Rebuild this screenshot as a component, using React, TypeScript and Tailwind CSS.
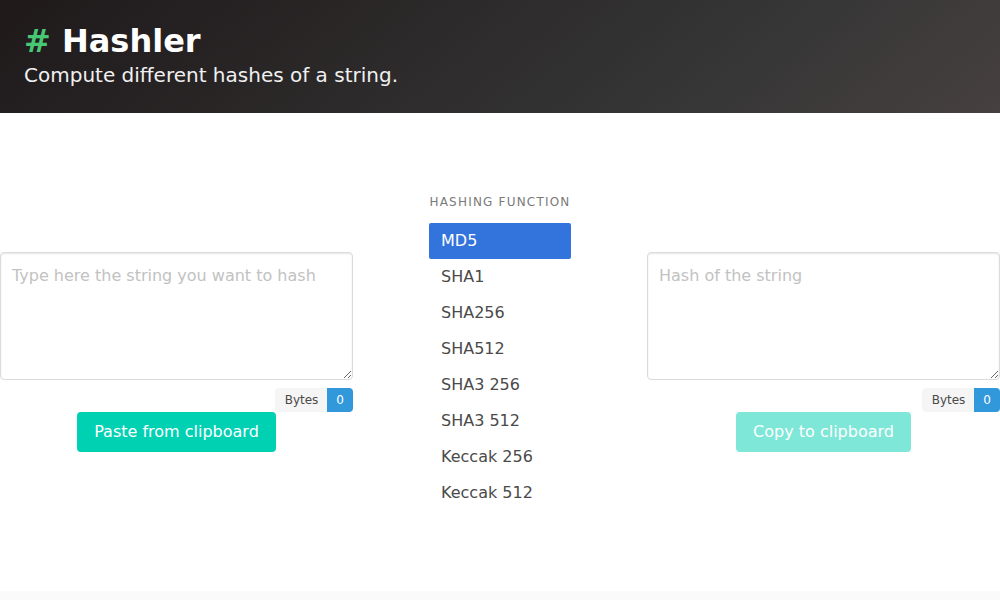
import React from "react";

const items = ["MD5", "SHA1", "SHA256", "SHA512", "SHA3 256", "SHA3 512", "Keccak 256", "Keccak 512"];

function BytesTag() {
  return (
    <div className="flex justify-end mt-2">
      <div className="flex h-6 text-xs leading-6">
        <span className="bg-[#f5f5f5] text-[#4a4a4a] pl-[9.5px] pr-[9px] rounded-l-[4px]">Bytes</span>
        <span className="bg-[#3298dc] text-white px-[9px] rounded-r-[4px]">0</span>
      </div>
    </div>
  );
}

export default function App() {
  return (
    <div className="min-h-[600px] flex flex-col bg-white" style={{ fontFamily: '"DejaVu Sans", sans-serif' }}>
      <header className="h-[113px] pt-[23px] px-6 bg-[linear-gradient(141deg,#1f191a_0%,#363636_71%,#46403f_100%)]">
        <h1 className="text-[32px] leading-[36px] font-bold text-white">
          <span className="text-[#48c774]">#</span> Hashler
        </h1>
        <p className="mt-1 text-[20px] leading-[25px] text-[#f0f0f0]">Compute different hashes of a string.</p>
      </header>
      <main className="h-[478px] grid grid-cols-[353px_1fr_353px] items-center">
        <div className="flex flex-col">
          <textarea
            placeholder="Type here the string you want to hash"
            className="block w-full h-32 border border-[#dbdbdb] rounded-[4px] px-[11px] py-[11px] text-base leading-6 text-[#363636] placeholder:text-[#c2c2c2] shadow-[inset_0_1px_2px_rgba(10,10,10,0.1)] outline-none"
          />
          <BytesTag />
          <div className="flex justify-center">
            <button className="h-10 px-[17px] rounded-[4px] bg-[#00d1b2] text-white text-base leading-6">Paste from clipboard</button>
          </div>
        </div>
        <div className="flex flex-col items-center">
          <p className="text-xs leading-[18px] tracking-[0.1em] uppercase text-[#7a7a7a] mb-3">Hashing function</p>
          <ul className="w-[142px]">
            {items.map((it, i) => (
              <li
                key={it}
                className={
                  i === 0
                    ? "px-3 py-2 text-base leading-5 rounded-[2px] bg-[#3273dc] text-white"
                    : "px-3 py-2 text-base leading-5 text-[#4a4a4a]"
                }
              >
                {it}
              </li>
            ))}
          </ul>
        </div>
        <div className="flex flex-col">
          <textarea
            readOnly
            placeholder="Hash of the string"
            className="block w-full h-32 border border-[#dbdbdb] rounded-[4px] px-[11px] py-[11px] text-base leading-6 text-[#363636] placeholder:text-[#c2c2c2] shadow-[inset_0_1px_2px_rgba(10,10,10,0.1)] outline-none"
          />
          <BytesTag />
          <div className="flex justify-center">
            <button disabled className="h-10 px-[17px] rounded-[4px] bg-[#00d1b2] opacity-50 text-white text-base leading-6">Copy to clipboard</button>
          </div>
        </div>
      </main>
      <footer className="flex-1 bg-[#fafafa]" />
    </div>
  );
}
